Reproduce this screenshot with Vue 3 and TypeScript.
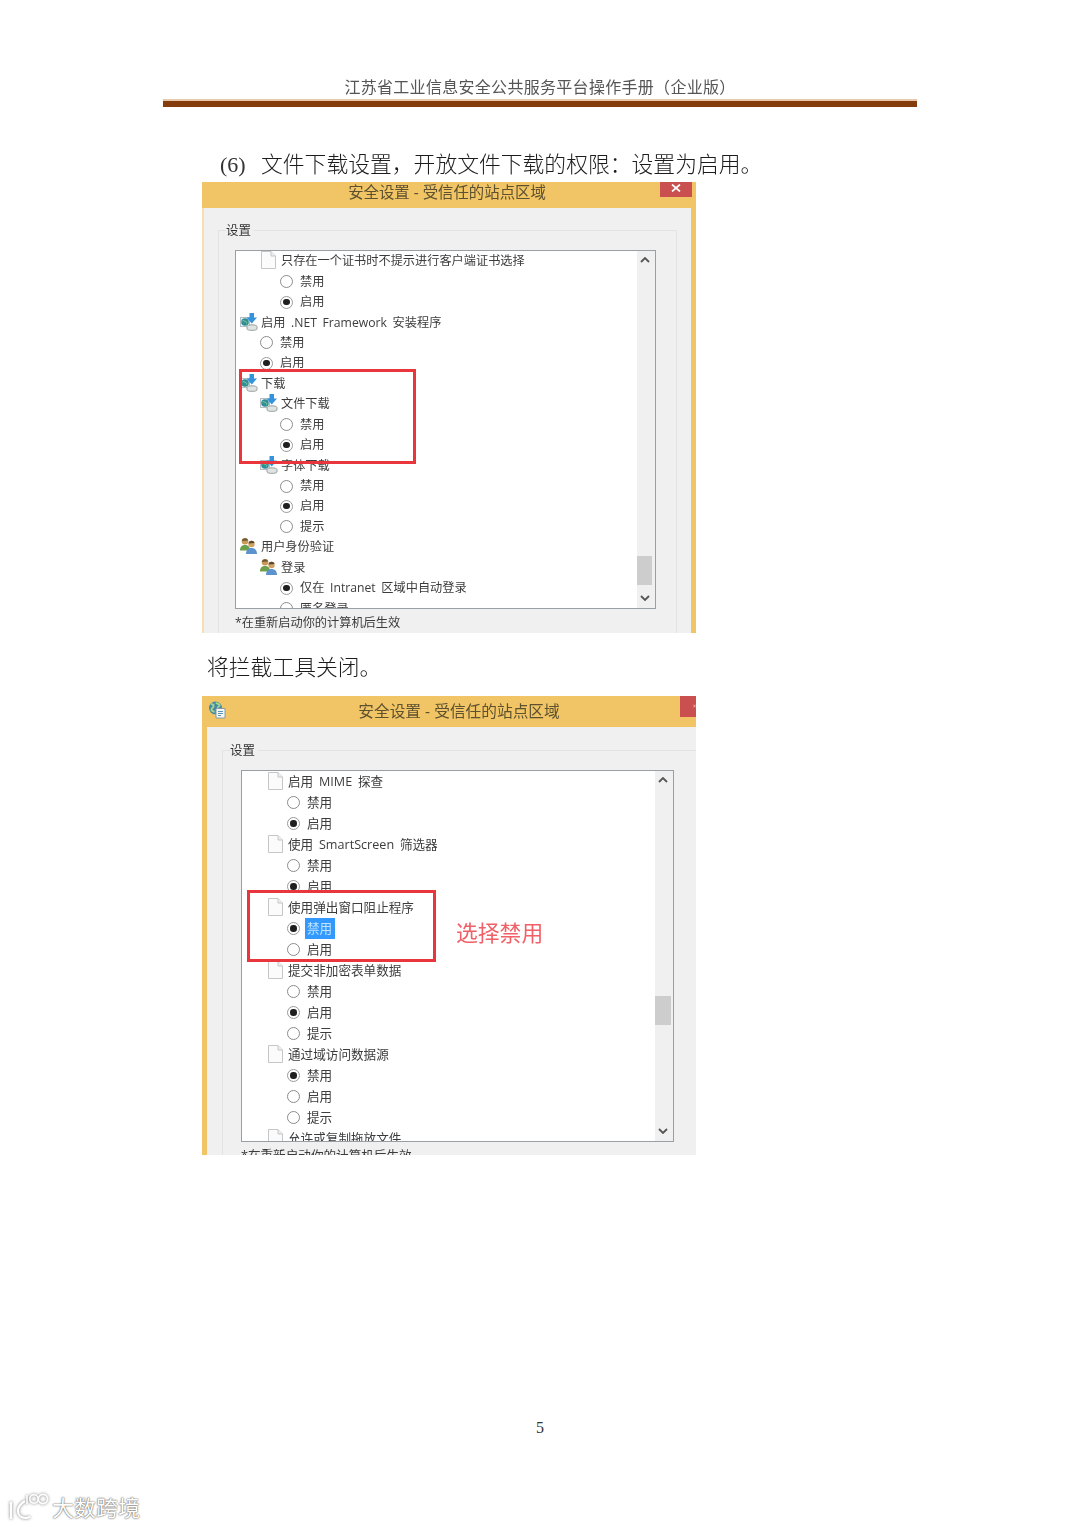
<script setup lang="ts">
type Kind = "doc" | "net" | "user" | "off" | "on";

interface Row {
  kind: Kind;
  level: number;
  label: string;
  selected?: boolean;
}

const settingsA: Row[] = [
  { kind: "doc", level: 2, label: "只存在一个证书时不提示进行客户端证书选择" },
  { kind: "off", level: 3, label: "禁用" },
  { kind: "on", level: 3, label: "启用" },
  { kind: "net", level: 1, label: "启用 .NET Framework 安装程序" },
  { kind: "off", level: 2, label: "禁用" },
  { kind: "on", level: 2, label: "启用" },
  { kind: "net", level: 1, label: "下载" },
  { kind: "net", level: 2, label: "文件下载" },
  { kind: "off", level: 3, label: "禁用" },
  { kind: "on", level: 3, label: "启用" },
  { kind: "net", level: 2, label: "字体下载" },
  { kind: "off", level: 3, label: "禁用" },
  { kind: "on", level: 3, label: "启用" },
  { kind: "off", level: 3, label: "提示" },
  { kind: "user", level: 1, label: "用户身份验证" },
  { kind: "user", level: 2, label: "登录" },
  { kind: "on", level: 3, label: "仅在 Intranet 区域中自动登录" },
  { kind: "off", level: 3, label: "匿名登录" },
];

const settingsB: Row[] = [
  { kind: "doc", level: 2, label: "启用 MIME 探查" },
  { kind: "off", level: 3, label: "禁用" },
  { kind: "on", level: 3, label: "启用" },
  { kind: "doc", level: 2, label: "使用 SmartScreen 筛选器" },
  { kind: "off", level: 3, label: "禁用" },
  { kind: "on", level: 3, label: "启用" },
  { kind: "doc", level: 2, label: "使用弹出窗口阻止程序" },
  { kind: "on", level: 3, label: "禁用", selected: true },
  { kind: "off", level: 3, label: "启用" },
  { kind: "doc", level: 2, label: "提交非加密表单数据" },
  { kind: "off", level: 3, label: "禁用" },
  { kind: "on", level: 3, label: "启用" },
  { kind: "off", level: 3, label: "提示" },
  { kind: "doc", level: 2, label: "通过域访问数据源" },
  { kind: "on", level: 3, label: "禁用" },
  { kind: "off", level: 3, label: "启用" },
  { kind: "off", level: 3, label: "提示" },
  { kind: "doc", level: 2, label: "允许或复制拖放文件" },
];

const dialogs = [
  { id: "a", rows: settingsA },
  { id: "b", rows: settingsB },
];

const isRadio = (row: Row) => row.kind === "on" || row.kind === "off";
</script>

<template>
  <div class="page">
    <header class="running-head">江苏省工业信息安全公共服务平台操作手册（企业版）</header>
    <div class="rule"></div>

    <template v-for="(dialog, index) in dialogs" :key="dialog.id">
      <p v-if="index === 0" class="para para-first">
        <span class="num">(6)</span>文件下载设置，开放文件下载的权限：设置为启用。
      </p>
      <p v-else class="para para-second">将拦截工具关闭。</p>

      <section class="dialog" :class="`dialog-${dialog.id}`">
        <div class="titlebar">
          <svg v-if="dialog.id === 'b'" class="globe" viewBox="0 0 18 18" aria-hidden="true">
            <circle cx="7.500" cy="7" r="6.500" fill="#3f87a8" />
            <path d="M3 3.500c2-1 3 .5 2.500 2S3 7.500 3.500 9 6 9.500 6 11.500M8 1.500c1 1.500 3 1 3.500 2.500S9 6 10 7" fill="none" stroke="#a6d38a" stroke-width="2" />
            <path d="M8 7.500h9v9.500H8z" fill="#f5f7f7" stroke="#8b9aa0" />
            <path d="M10 10.500h5M10 12.500h5M10 14.500h3" stroke="#5c93b0" />
          </svg>
          <span class="title">安全设置 - 受信任的站点区域</span>
          <span class="close">
            <svg viewBox="0 0 10 8" aria-hidden="true"><path d="M1 .5l8 7M9 .5l-8 7" stroke="#fff" stroke-width="1.700" /></svg>
          </span>
        </div>

        <div class="body">
          <div class="group">
            <span class="legend">设置</span>
            <div class="listbox">
              <ul class="rows">
                <li
                  v-for="row in dialog.rows"
                  :key="row.label + row.kind + row.level"
                  class="row"
                  :class="`lv${row.level}`"
                >
                  <span class="slot" :class="{ 'slot-icon': !isRadio(row) }">
                    <svg v-if="row.kind === 'doc'" class="ico-doc" viewBox="0 0 15 18" aria-hidden="true">
                      <path d="M.5.500h9.500l4.500 4.500v12.500H.5z" fill="#fbfbfb" stroke="#c6c6c6" />
                      <path d="M10 .500V5h4.500" fill="#eee" stroke="#c6c6c6" />
                    </svg>
                    <svg v-else-if="row.kind === 'net'" class="ico-net" viewBox="0 0 18 18" aria-hidden="true">
                      <rect x=".5" y="4.500" width="9" height="9" fill="#eef1f3" stroke="#b5bec4" />
                      <circle cx="5" cy="9" r="3.800" fill="#2f8f96" />
                      <path d="M2.500 8c1.500-1 2 .5 3 .5s1.500 1 1 2" fill="none" stroke="#8fcf9a" />
                      <path d="M7 13.500c0-2.200 10-2.200 10 0v2.500c0 1.800-10 1.800-10 0z" fill="#dfe3e2" stroke="#97a29f" />
                      <path d="M9.500 0h4.500v4.500h3l-5.250 6-5.250-6h3z" fill="#3593dc" />
                    </svg>
                    <svg v-else-if="row.kind === 'user'" class="ico-user" viewBox="0 0 18 17" aria-hidden="true">
                      <circle cx="5" cy="3.800" r="3.300" fill="#c99a55" />
                      <path d="M1.800 3.500a3.300 3.300 0 0 1 6.400-.5z" fill="#6a5a3a" />
                      <path d="M0 13c0-4 2-5.500 5-5.500S10 9 10 13z" fill="#6ea04c" />
                      <circle cx="11.500" cy="6.500" r="3.200" fill="#d2a064" />
                      <path d="M8.400 6a3.200 3.200 0 0 1 6.200-.5z" fill="#5a4630" />
                      <path d="M6 16.500c0-4 2.300-6 5.500-6s5.500 2 5.500 6z" fill="#5c93cf" />
                    </svg>
                    <span v-else class="radio" :class="{ checked: row.kind === 'on' }"></span>
                  </span>
                  <span class="label" :class="{ selected: row.selected }">{{ row.label }}</span>
                </li>
              </ul>

              <div class="scrollbar">
                <svg class="chevron" viewBox="0 0 10 6" aria-hidden="true"><path d="M1 5l4-4 4 4" fill="none" stroke="#555" stroke-width="1.800" /></svg>
                <span class="thumb"></span>
                <svg class="chevron chevron-down" viewBox="0 0 10 6" aria-hidden="true"><path d="M1 1l4 4 4-4" fill="none" stroke="#555" stroke-width="1.800" /></svg>
              </div>
            </div>
            <p class="footnote">*在重新启动你的计算机后生效</p>
          </div>
        </div>

        <div class="callout"></div>
        <span v-if="dialog.id === 'b'" class="annotation">选择禁用</span>
      </section>
    </template>

    <footer class="page-no">5</footer>

    <div class="watermark">
      <svg class="wm-logo" viewBox="0 0 42 28" aria-hidden="true">
        <path d="M3 11v16M2 12l2-2M17 9c-5 3-7 6-7 10s3 7 8 7c2 0 3-.5 4-1.500" fill="none" stroke="#fff" stroke-width="2.200" />
        <path d="M19 3v9" fill="none" stroke="#fff" stroke-width="1.600" />
        <circle cx="26" cy="7" r="4.200" fill="none" stroke="#fff" stroke-width="1.600" />
        <circle cx="35" cy="7" r="4.600" fill="none" stroke="#fff" stroke-width="1.600" />
      </svg>
      <span class="wm-text">大数跨境</span>
    </div>
  </div>
</template>

<style scoped>
.page {
  position: relative;
  width: 1080px;
  height: 1527px;
  overflow: hidden;
  background: #fff;
  font-family: "Open Sans", "Noto Sans CJK SC", sans-serif;
}

.running-head {
  padding-top: 78px;
  height: 21px;
  line-height: 20px;
  text-align: center;
  font-family: "Liberation Serif", "Noto Sans CJK SC", serif;
  font-size: 16px;
  letter-spacing: 0.300px;
  color: #555;
  filter: blur(0.3px);
}

.rule {
  width: 754px;
  height: 6px;
  margin-left: 163px;
  border-top: 2px solid #e9c9ab;
  background: #843c0c;
}

.para {
  margin: 0;
  font-size: 21.800px;
  line-height: 30px;
  color: #1c1c1c;
  font-family: "Noto Sans CJK SC", sans-serif;
  font-weight: 300;
  filter: blur(0.3px);
}

.para-first {
  margin-top: 41px;
  padding-left: 220px;
  height: 34px;
}

.para-second {
  margin-top: 18px;
  padding-left: 207px;
  height: 45px;
}

.num {
  display: inline-block;
  width: 41px;
  font-family: "Liberation Serif", serif;
  font-size: 22px;
  color: #333;
}

.dialog {
  position: relative;
  width: 494px;
  margin-left: 202px;
  overflow: hidden;
  background: #f1c565;
  filter: blur(0.4px);
}

.dialog-a {
  height: 451px;
  --row-h: 20.450px;
  --fs: 12.200px;
}

.dialog-b {
  height: 459px;
  --row-h: 21px;
  --fs: 12.600px;
}

.titlebar {
  position: relative;
  display: flex;
  align-items: center;
  justify-content: center;
  box-sizing: border-box;
  color: #5d5130;
}

.dialog-a .titlebar {
  height: 26px;
  padding: 0 4px 7px 0;
  font-size: 15.400px;
}

.dialog-b .titlebar {
  height: 31px;
  padding: 0 0 2px 20px;
  font-size: 15.700px;
}

.globe {
  position: absolute;
  left: 6px;
  top: 5px;
  width: 18px;
  height: 18px;
}

.close {
  position: absolute;
  top: 0;
  display: flex;
  box-sizing: border-box;
  background: #c9504f;
}

.close svg {
  width: 10px;
  height: 8px;
}

.dialog-a .close {
  right: 4px;
  width: 32px;
  height: 15px;
  justify-content: center;
  padding-top: 2px;
}

.dialog-b .close {
  right: 0;
  width: 16px;
  height: 21px;
  padding: 6px 0 0 13px;
}

.body {
  background: #f0f0f0;
  box-sizing: border-box;
}

.dialog-a .body {
  height: 425px;
  margin-right: 5px;
  border-left: 2px solid #f5e0b5;
  padding: 22px 14px 0 14px;
}

.dialog-b .body {
  height: 428px;
  margin: 0 0 0 5px;
  padding: 23px 0 0 15px;
}

.group {
  position: relative;
  height: 420px;
  border: 1px solid #e3e3e3;
  border-bottom: 0;
}

.dialog-b .group {
  border-right: 0;
}

.legend {
  position: absolute;
  top: -9px;
  left: 7px;
  padding-right: 3px;
  background: #f0f0f0;
  font-size: 12.500px;
  line-height: 18px;
  color: #333;
}

.listbox {
  display: flex;
  box-sizing: border-box;
  background: #fff;
  border: 1px solid #9a9fa3;
  overflow: hidden;
}

.dialog-a .listbox {
  width: 421px;
  height: 359px;
  margin: 19px 0 0 16px;
}

.dialog-b .listbox {
  width: 433px;
  height: 372px;
  margin: 19px 0 0 18px;
}

.rows {
  flex: 1;
  min-width: 0;
  margin: -1px 0 0;
  padding: 0;
  list-style: none;
}

.row {
  display: flex;
  align-items: center;
  height: var(--row-h);
  font-size: var(--fs);
  word-spacing: 2.500px;
  color: #3c3c3c;
  white-space: nowrap;
}

.lv1 {
  padding-left: 4px;
}

.lv2 {
  padding-left: 24px;
}

.lv3 {
  padding-left: 44px;
}

.dialog-b .lv2 {
  padding-left: 25px;
}

.dialog-b .lv3 {
  padding-left: 45px;
}

.slot {
  display: flex;
  align-items: center;
  flex: none;
  width: 20px;
}

.slot-icon {
  width: 21px;
}

.ico-doc {
  width: 15px;
  height: 18px;
  margin-left: 1px;
}

.ico-net,
.ico-user {
  width: 18px;
  height: 18px;
}

.radio {
  box-sizing: border-box;
  position: relative;
  top: 1px;
  width: 13px;
  height: 13px;
  border: 1.300px solid #8c8c8c;
  border-radius: 50%;
  background: #fff;
}

.radio.checked {
  border-color: #9a9a9a;
}

.radio.checked::after {
  content: "";
  position: absolute;
  top: 2px;
  left: 2px;
  width: 6.500px;
  height: 6.500px;
  border-radius: 50%;
  background: #1f1f1f;
}

.label.selected {
  display: inline-block;
  position: relative;
  top: 1px;
  margin-left: -2px;
  padding: 0 3px 0 2px;
  height: 21px;
  line-height: 21px;
  background: #3399ff;
  color: #bfe3ff;
}

.scrollbar {
  position: relative;
  flex: none;
  width: 18px;
  background: #f0f0f0;
}

.chevron {
  position: absolute;
  top: 6px;
  left: 3px;
  width: 10px;
  height: 6px;
}

.chevron-down {
  top: auto;
  bottom: 7px;
}

.thumb {
  position: absolute;
  left: 0;
  width: 15px;
  height: 29px;
  background: #cdcdcd;
}

.dialog-a .thumb {
  top: 305px;
}

.dialog-b .thumb {
  top: 225px;
  width: 16px;
}

.footnote {
  margin: 5px 0 0 16px;
  font-size: 12.200px;
  line-height: 17px;
  color: #3c3c3c;
}

.dialog-b .footnote {
  margin: 5px 0 0 18px;
  font-size: 12.600px;
}

.callout {
  position: absolute;
  box-sizing: border-box;
  border: 3px solid #e8363c;
}

.dialog-a .callout {
  left: 37px;
  top: 187px;
  width: 177px;
  height: 95px;
}

.dialog-b .callout {
  left: 45px;
  top: 194px;
  width: 189px;
  height: 72px;
}

.annotation {
  position: absolute;
  left: 254px;
  top: 221px;
  font-family: "Noto Sans CJK SC", sans-serif;
  font-size: 21.800px;
  line-height: 30px;
  color: #ef6068;
}

.page-no {
  position: absolute;
  top: 1419px;
  left: 0;
  width: 100%;
  text-align: center;
  font-family: "Liberation Serif", serif;
  font-size: 16px;
  line-height: 18px;
  color: #333;
}

.watermark {
  position: absolute;
  left: 8px;
  top: 1492px;
  display: flex;
  align-items: flex-start;
  gap: 2px;
}

.wm-logo {
  width: 42px;
  height: 28px;
  filter: drop-shadow(0 0 1.500px rgba(0, 0, 0, 0.55));
}

.wm-text {
  font-family: "Noto Sans CJK SC", sans-serif;
  font-size: 22px;
  line-height: 28px;
  color: #fff;
  text-shadow: 0 0 2px rgba(0, 0, 0, 0.6), 0 0 1px rgba(0, 0, 0, 0.5);
}
</style>
